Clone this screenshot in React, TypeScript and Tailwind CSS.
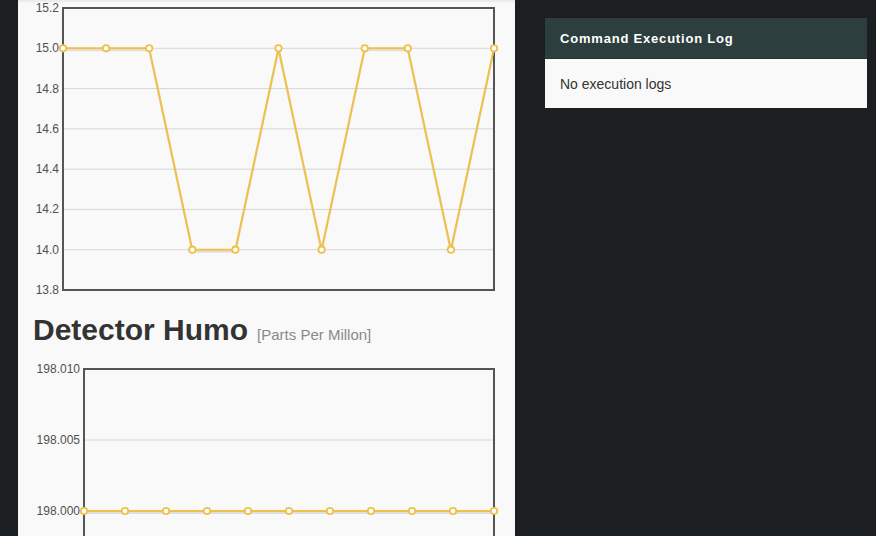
const chart1 = [15, 15, 15, 14, 14, 15, 14, 15, 15, 14, 15];
const chart2 = [198, 198, 198, 198, 198, 198, 198, 198, 198, 198, 198];

type ChartProps = {
  data: number[];
  ticks: string[];
  min: number;
  max: number;
  left: number;
  right: number;
  top: number;
  bottom: number;
  height: number;
  labelX: number;
};

function LineChart({ data, ticks, min, max, left, right, top, bottom, height, labelX }: ChartProps) {
  const ty = (v: number) => bottom - ((v - min) / (max - min)) * (bottom - top);
  const step = (right - left) / (data.length - 1);
  const pts = data.map((v, i) => [left + i * step, ty(v)]);
  const path = pts.map((p) => p.join(",")).join(" ");
  const shadow = pts.map((p) => `${p[0]},${p[1] + 2}`).join(" ");

  return (
    <svg width={497} height={height} className="block shrink-0">
      {ticks.map((t, i) => {
        const y = bottom - (i * (bottom - top)) / (ticks.length - 1);
        return (
          <g key={i}>
            {i > 0 && i < ticks.length - 1 && (
              <line x1={left} x2={right} y1={y} y2={y} stroke="#d6d6d6" strokeWidth={1} />
            )}
            {t && (
              <text
                x={labelX}
                y={y + 4}
                textAnchor="end"
                fontSize={12}
                fill="#505050"
                fontFamily='"Liberation Sans", Arial, sans-serif'
              >
                {t}
              </text>
            )}
          </g>
        );
      })}
      <rect x={left} y={top} width={right - left} height={bottom - top} fill="none" stroke="#555" strokeWidth={2} />
      <polyline points={shadow} fill="none" stroke="rgba(0,0,0,0.1)" strokeWidth={2} />
      <polyline points={path} fill="none" stroke="#efc148" strokeWidth={2} />
      {pts.map((p, i) => (
        <circle key={i} cx={p[0]} cy={p[1]} r={3.2} fill="#fff" stroke="#efc148" strokeWidth={1.8} />
      ))}
    </svg>
  );
}

export default function App() {
  return (
    <div className="h-[536px] w-[876px] overflow-hidden bg-[#1b1f22] pl-[18px] flex items-start gap-[30px] font-['Liberation_Sans',Arial,sans-serif]">
      <div className="w-[497px] shrink-0 bg-[#f9f9f9] flex flex-col shadow-[inset_0_2px_2px_rgba(0,0,0,0.06)]">
        <LineChart
          data={chart1}
          ticks={["13.8", "14.0", "14.2", "14.4", "14.6", "14.8", "15.0", "15.2"]}
          min={13.8}
          max={15.2}
          left={45}
          right={476}
          top={8}
          bottom={290}
          height={300}
          labelX={41}
        />
        <div className="flex items-baseline gap-[9px] pl-[15px] pt-[15px] h-[55px] shrink-0">
          <h2 className="text-[30px] font-bold text-[#333] leading-none">Detector Humo</h2>
          <span className="text-[15px] text-[#8a8a8a]">[Parts Per Millon]</span>
        </div>
        <LineChart
          data={chart2}
          ticks={["", "198.000", "198.005", "198.010"]}
          min={197.995}
          max={198.01}
          left={66}
          right={476}
          top={14}
          bottom={227}
          height={240}
          labelX={62}
        />
      </div>
      <div className="w-[322px] shrink-0 mt-[18px]">
        <div className="h-[41px] bg-[#2c3f3e] border-b border-[#243332] flex items-center px-[15px] pt-[1px]">
          <span className="text-white text-[13px] font-bold tracking-[0.8px]">Command Execution Log</span>
        </div>
        <div className="h-[49px] bg-[#f9f9f9] flex items-center px-[15px] pt-[1px]">
          <span className="text-[14px] text-[#333]">No execution logs</span>
        </div>
      </div>
    </div>
  );
}
